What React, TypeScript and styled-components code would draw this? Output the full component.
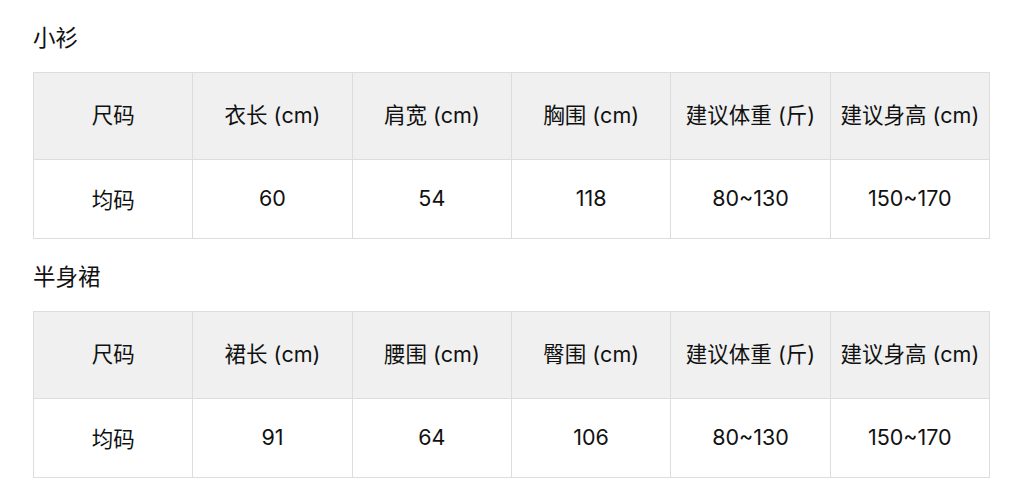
import React from "react";
import styled, { createGlobalStyle } from "styled-components";

const GlobalStyle = createGlobalStyle`
  body {
    margin: 0;
    background: #ffffff;
    font-family: "Inter", "Noto Sans CJK SC", sans-serif;
    color: #111111;
  }
`;

const Page = styled.div`
  width: 1024px;
  padding: 22px 0 0 33px;
  box-sizing: border-box;

  display: flex;
  flex-direction: column;
`;

const Section = styled.section`
  display: flex;
  flex-direction: column;
  gap: 18px;

  & + & {
    margin-top: 22px;
  }
`;

const Title = styled.h2`
  margin: 0;

  font-size: 22.5px;
  font-weight: 400;
  line-height: 32px;
`;

const Table = styled.table`
  width: 957px;

  border-collapse: collapse;
  table-layout: fixed;
`;

const HeadCell = styled.th`
  height: 87px;
  padding: 0 0 5px;
  box-sizing: border-box;

  background-color: #f0f0f0;
  border: 1px solid #dddddd;

  font-size: 21.5px;
  font-weight: 400;
  text-align: center;
  white-space: nowrap;
`;

const Cell = styled.td`
  height: 79px;
  padding: 0 0 2px;
  box-sizing: border-box;

  border: 1px solid #dddddd;

  font-size: 21.5px;
  text-align: center;
`;

type SizeTable = {
  title: string;
  headers: string[];
  values: string[];
};

const TABLES: SizeTable[] = [
  {
    title: "小衫",
    headers: ["尺码", "衣长 (cm)", "肩宽 (cm)", "胸围 (cm)", "建议体重 (斤)", "建议身高 (cm)"],
    values: ["均码", "60", "54", "118", "80~130", "150~170"],
  },
  {
    title: "半身裙",
    headers: ["尺码", "裙长 (cm)", "腰围 (cm)", "臀围 (cm)", "建议体重 (斤)", "建议身高 (cm)"],
    values: ["均码", "91", "64", "106", "80~130", "150~170"],
  },
];

function App() {
  return (
    <>
      <GlobalStyle />
      <Page>
        {TABLES.map((table) => (
          <Section key={table.title}>
            <Title>{table.title}</Title>
            <Table>
              <thead>
                <tr>
                  {table.headers.map((header) => (
                    <HeadCell key={header}>{header}</HeadCell>
                  ))}
                </tr>
              </thead>
              <tbody>
                <tr>
                  {table.values.map((value, i) => (
                    <Cell key={i}>{value}</Cell>
                  ))}
                </tr>
              </tbody>
            </Table>
          </Section>
        ))}
      </Page>
    </>
  );
}

export default App;
